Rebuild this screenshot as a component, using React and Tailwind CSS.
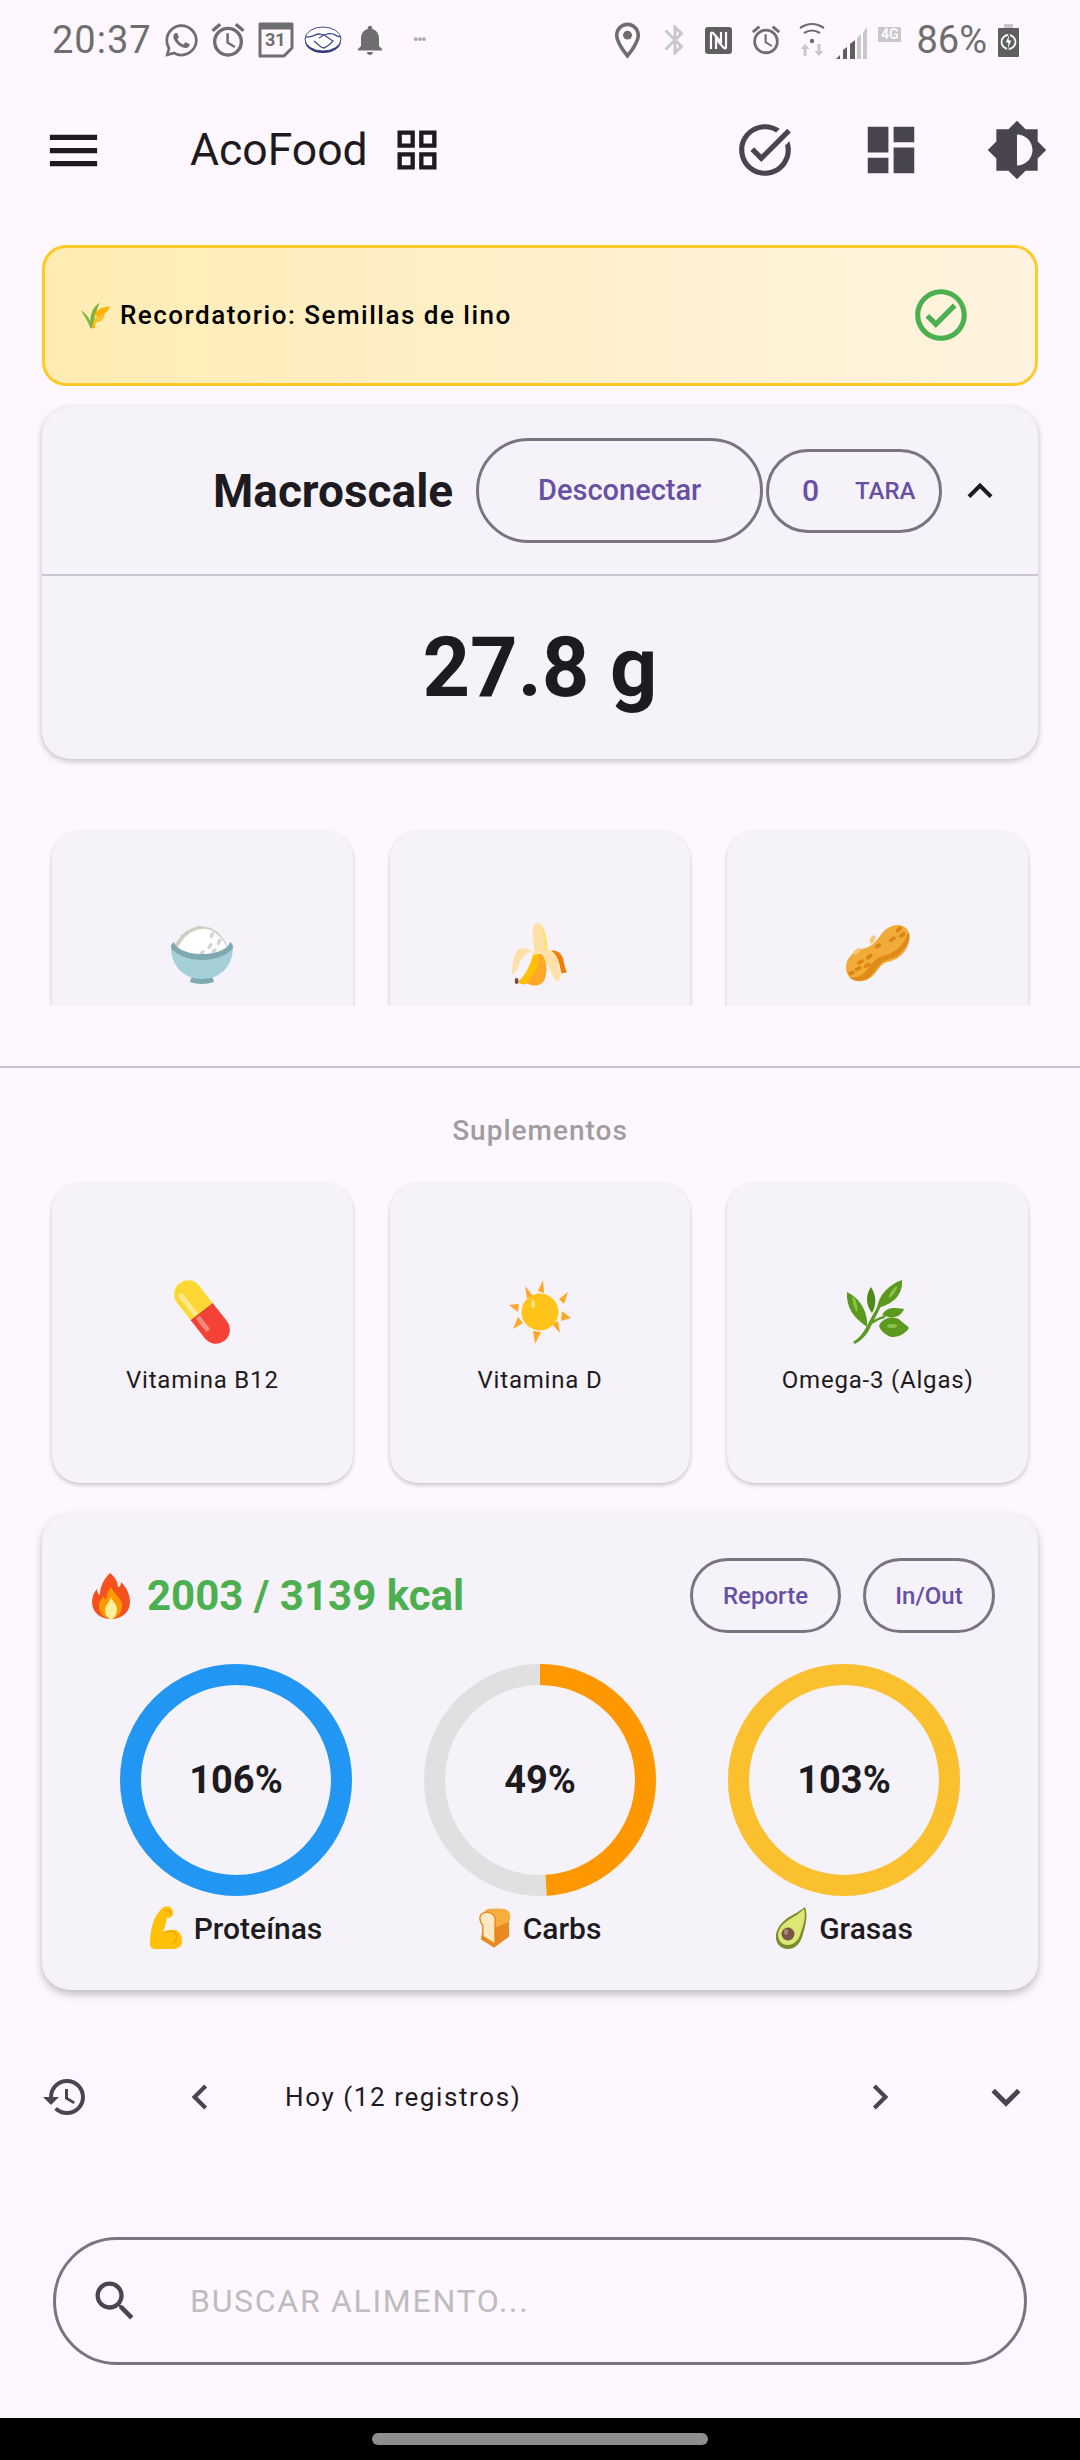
import React from 'react'
import { FaWhatsapp } from 'react-icons/fa'
import {
  MdMenu, MdGridView, MdOutlineTaskAlt, MdDashboard, MdBrightnessMedium, MdOutlineCheckCircle,
  MdExpandLess, MdExpandMore, MdHistory, MdChevronLeft, MdChevronRight, MdSearch, MdNotifications,
  MdOutlineAlarm, MdOutlineLocationOn, MdBluetooth,
} from 'react-icons/md'

function Rice() {
  return (
    <svg viewBox="0 0 64 64" className="w-[64px] h-[64px]">
      <path d="M22 54h20l2 6q-12 4-24 0z" fill="#7fa9b1" />
      <path d="M1 25c0 16 10 32 31 32s31-16 31-32z" fill="#a6d0d8" />
      <path d="M5 23c1-4 5-6 6-10 3-1 5-5 8-5 3-3 6-2 9-4 3 0 5 0 8 1 3 0 5 1 8 3 3 1 5 3 7 6 2 2 4 5 6 9l-2 8H6z" fill="#d0cdc2" />
      <path d="M8 26c1-4 4-6 6-10 3-2 5-5 8-6 4-2 10-4 15-3 5 1 9 4 12 7 3 3 6 7 8 12-6 5-15 7-25 7s-18-2-24-7z" fill="#fff" />
      <g fill="#d4d4d4">
        <ellipse cx="42" cy="13" rx="1.8" ry="3.4" transform="rotate(20 42 13)" />
        <ellipse cx="49" cy="20" rx="1.8" ry="3.4" transform="rotate(25 49 20)" />
        <ellipse cx="40" cy="24" rx="1.8" ry="3.4" transform="rotate(35 40 24)" />
        <ellipse cx="32" cy="31" rx="1.8" ry="3.4" transform="rotate(40 32 31)" />
        <ellipse cx="44" cy="29" rx="1.8" ry="3.4" transform="rotate(40 44 29)" />
      </g>
      <path d="M1 25c0-2 1-4 3-5 1 6 12 12 28 12s27-6 28-12c2 1 3 3 3 5 0 4-13 13-31 13S1 29 1 25z" fill="#7fa9b1" />
    </svg>
  )
}

function Banana() {
  return (
    <svg viewBox="2 8 60 50" preserveAspectRatio="none" className="w-[55px] h-[63px]">
      <path d="M40 30c0-8-3-17-7-21-3-2-7-1-8 3-1 7 1 18 3 27l12 2z" fill="#ffe0a8" />
      <path d="M33 8c5 4 8 14 8 22l-3 2c0-8-2-18-5-24z" fill="#ffe26a" />
      <path d="M25 31q8 4 16-1l2 6-8 7-9-6z" fill="#ffe26a" />
      <path d="M19 56c-4 1-8 0-11-1 8-3 17-14 17-20 3-2 7-3 9-2 6 4 7 12 4 19-3 6-12 7-19 4z" fill="#ffa726" />
      <path d="M8 55c9-5 15-16 17-22l6 1c1 9-7 19-16 23z" fill="#ffc107" />
      <ellipse cx="7" cy="54" rx="2" ry="2.4" fill="#6d4c41" />
      <path d="M2 49c0-8 2-17 7-20 5-2 11-1 15 2-6 0-11 4-14 9-2 4-4 8-8 9z" fill="#ffe0a8" />
      <path d="M35 33c3-4 9-5 14-1 3 3 4 12 6 17 1 4-3 6-6 4-5-4-6-13-14-20z" fill="#ffe0a8" />
      <path d="M45 30c6-1 11 2 13 7 1 4 2 8 4 10l-6 1c-2-6-3-14-11-18z" fill="#f57c00" />
    </svg>
  )
}

function Peanut() {
  return (
    <svg viewBox="4 7 58 56" preserveAspectRatio="none" className="w-[64px] h-[61px]">
      <path d="M4 47c0-10 8-16 18-18 6-2 10-7 15-14 5-6 13-9 19-6 6 3 7 11 4 18-3 8-11 14-19 15-4 1-6 4-9 8-5 8-12 11-19 9-6-2-9-6-9-12z" fill="#f0ab38" />
      <path d="M61 14c2 8-3 16-9 21-5 4-11 4-15 7-5 4-7 11-14 15-5 3-12 3-16-1 8 1 13-3 17-8 4-6 7-10 14-12 8-2 16-7 20-16z" fill="#e08a1a" />
      <g fill="#dc8514">
        <ellipse cx="52" cy="12" rx="1.8" ry="3.4" transform="rotate(50 52 12)" />
        <ellipse cx="55" cy="17" rx="1.8" ry="3.4" transform="rotate(50 55 17)" />
        <ellipse cx="46" cy="21" rx="1.8" ry="3.4" transform="rotate(55 46 21)" />
        <ellipse cx="33" cy="27" rx="1.8" ry="3.4" transform="rotate(55 33 27)" />
        <ellipse cx="25" cy="37" rx="1.8" ry="3.4" transform="rotate(50 25 37)" />
        <ellipse cx="17" cy="42" rx="1.8" ry="3.4" transform="rotate(60 17 42)" />
        <ellipse cx="23" cy="45" rx="1.8" ry="3.4" transform="rotate(60 23 45)" />
        <ellipse cx="15" cy="48" rx="1.8" ry="3.4" transform="rotate(60 15 48)" />
        <ellipse cx="9" cy="52" rx="1.8" ry="3" transform="rotate(70 9 52)" />
      </g>
      <ellipse cx="14" cy="32" rx="2" ry="4" transform="rotate(55 14 32)" fill="#f8c675" />
      <ellipse cx="28" cy="21" rx="2" ry="4" transform="rotate(25 28 21)" fill="#f8c675" />
    </svg>
  )
}

function Pill() {
  return (
    <svg viewBox="0 0 64 64" className="w-[64px] h-[64px]">
      <g transform="rotate(-38 32 32)">
        <path d="M18 32V9.5a14 14 0 0 1 28 0V32z" fill="#fdd835" />
        <path d="M18 32v22.5a14 14 0 0 0 28 0V32z" fill="#f44336" />
        <rect x="18" y="31.4" width="28" height="1.2" fill="#b71c1c" opacity="0.6" />
        <rect x="23" y="4" width="5" height="27" rx="2.5" fill="#fff" opacity="0.45" />
        <rect x="23" y="33" width="5" height="18" rx="2.5" fill="#fff" opacity="0.35" />
      </g>
    </svg>
  )
}

function Sun() {
  return (
    <svg viewBox="0 0 64 64" className="w-[64px] h-[64px]">
      <g fill="#ffa726">
        <path d="M35 0l1 13-6-2z" />
        <path d="M17 6l8 10-6 2z" />
        <path d="M60 12l-4 12-5-5z" />
        <path d="M1 25l10-1-1 8z" />
        <path d="M63 38l-10 3 1-10z" />
        <path d="M5 49l5-12 5 6z" />
        <path d="M52 53l-8-9 6-3z" />
        <path d="M27 64l-2-13 8 1z" />
      </g>
      <circle cx="32" cy="32" r="18.5" fill="#ffc31a" />
      <ellipse cx="25" cy="24" rx="2" ry="4" fill="#ffe083" />
    </svg>
  )
}

function Herb() {
  return (
    <svg viewBox="0 0 64 64" className="w-[64px] h-[64px]">
      <path d="M7 62c8-5 12-12 16-20 4-8 8-14 12-22l2 1c-3 8-6 13-9 19 4-2 7-4 11-4l0 2c-5 1-8 3-13 6-4 9-8 15-17 20z" fill="#5b9a1f" />
      <path d="M31 28C33 15 42 5 56 0c1 13-7 24-25 28z" fill="#5b9a1f" />
      <path d="M26 33c-6-8-7-17-1-26 5 8 6 17 1 26z" fill="#4e8a1a" />
      <path d="M21 47C8 38 0 28 1 12c12 6 21 18 20 35z" fill="#5b9a1f" />
      <path d="M36 35c4-8 12-8 22-6-3 8-12 11-22 6z" fill="#5b9a1f" />
      <path d="M33 46c3-8 14-11 21-6 2 2 9 7 9 8-4 7-16 12-22 7-4-2-7-6-8-9z" fill="#5b9a1f" />
      <ellipse cx="9" cy="24" rx="1.6" ry="8" transform="rotate(-15 9 24)" fill="#8bc34a" />
      <ellipse cx="47" cy="12" rx="1.6" ry="7" transform="rotate(35 47 12)" fill="#8bc34a" />
      <ellipse cx="46" cy="46" rx="5" ry="2" fill="#8bc34a" />
    </svg>
  )
}

function Fire() {
  return (
    <svg viewBox="0 0 38 46" className="w-[38px] h-[46px]">
      <path d="M18 0c5 4 8 9 8 14 2 0 3-2 3-5 6 6 9 13 9 20 0 10-8 17-19 17S0 39 0 29c0-5 2-10 5-13 0 3 1 5 3 6 0-9 4-16 10-22z" fill="#f4511e" />
      <path d="M19 14c2 5 8 9 11 16 1 8-4 16-11 16S6 39 7 31c1-4 3-6 5-8 0 2 1 3 2 4 0-5 2-9 5-13z" fill="#ff9800" />
      <path d="M19 24c1 4 6 7 6 12s-3 10-6 10-6-4-6-9c0-5 5-8 6-13z" fill="#ffee9e" />
    </svg>
  )
}

function Muscle() {
  return (
    <svg viewBox="0 0 32 44" className="w-[32px] h-[44px]">
      <path d="M14 1c6-2 10 2 9 7-1 3-3 4-6 4-1 6-3 10-4 15 3-3 8-4 12-3 5 1 7 6 7 11 0 6-4 8-10 8H5c-3 0-5-2-5-5C0 26 3 12 9 6c1-2 3-4 5-5z" fill="#ffc107" />
      <path d="M13 27c3-2 9-3 12 0 3 3 2 8-2 10" fill="none" stroke="#f59f00" strokeWidth="1.4" />
      <path d="M15 5c3-2 6 0 5 3" fill="none" stroke="#f59f00" strokeWidth="1.4" />
    </svg>
  )
}

function Bread() {
  return (
    <svg viewBox="0 0 34 42" className="w-[32px] h-[40px]">
      <path d="M7 2C11 0 24 0 29 2c4 2 5 7 3 10v18L16 42 2 33z" fill="#e88a1f" />
      <path d="M6 3c5-3 19-3 23-1 5 2 5 9 3 12l-15 7C8 12 4 8 6 3z" fill="#f6ae3e" />
      <path d="M1 10c0-5 7-7 11-5 5 2 6 7 5 10v23L4 30V18c-2-2-3-5-3-8z" fill="#ffe8c2" stroke="#e88a1f" strokeWidth="1.5" />
    </svg>
  )
}

function Avocado() {
  return (
    <svg viewBox="0 0 32 44" className="w-[32px] h-[44px]">
      <path d="M30 1c3 8 1 17-2 27-2 9-8 15-15 15C5 43 0 37 1 29 2 21 8 15 14 11 19 8 25 5 30 1z" fill="#7c8c2c" />
      <path d="M29 3c2 7 0 15-3 23-2 8-7 13-13 13-7 0-10-5-10-11 1-7 7-12 12-15 5-3 10-6 14-10z" fill="#dce775" />
      <circle cx="13" cy="28" r="6.5" fill="#795548" />
      <ellipse cx="11" cy="26" rx="2" ry="3" fill="#a1887f" />
    </svg>
  )
}

function Sheaf() {
  return (
    <svg viewBox="0 0 32 32" className="w-[30px] h-[30px]">
      <path d="M11 30C9 24 4 16 1 11c5 3 8 7 10 12 0-8 3-16 10-20-3 7-5 13-6 20l-2 7z" fill="#7cb342" />
      <path d="M13 30c0-6 3-12 8-14l1 2c-4 2-6 6-6 12z" fill="#ffb300" />
      <path d="M15 17c2-6 8-10 17-10-2 6-8 11-17 10z" fill="#ffb300" />
      <path d="M15 24c1-5 5-9 11-9 0 5-4 10-11 9z" fill="#fbc02d" />
    </svg>
  )
}

function Handshake() {
  return (
    <svg viewBox="0 0 38 28" className="w-[38px] h-[28px]">
      <ellipse cx="19" cy="15" rx="18" ry="12" fill="#2d3277" />
      <ellipse cx="19" cy="13" rx="18" ry="12" fill="#fff" stroke="#3f4a8a" strokeWidth="1" />
      <path d="M2 11c6 1 9-3 13-3 2 0 3 1 5 1 3-1 6-2 9-1 2 1 5 3 8 3M10 15l7 6 3 1 5-3 4-4-9-6-5 3" fill="none" stroke="#3f4a8a" strokeWidth="1.3" />
    </svg>
  )
}

function CalendarIcon() {
  return (
    <div className="relative w-[36px] h-[36px]">
      <svg viewBox="0 0 36 36" className="absolute inset-0 w-full h-full">
        <path d="M2 2h32v24l-8 8H2z" fill="none" stroke="#6e6e6e" strokeWidth="3" strokeLinejoin="round" />
        <path d="M2 5h32" stroke="#6e6e6e" strokeWidth="5" />
      </svg>
      <span className="absolute left-[7px] top-[8px] text-[18px] leading-[20px] font-bold text-[#6e6e6e]">31</span>
    </div>
  )
}

function NfcIcon() {
  return (
    <svg viewBox="0 0 27 27" className="w-[27px] h-[27px]">
      <rect width="27" height="27" rx="3" fill="#5f5f5f" />
      <path d="M6 22V7q0-2 2-1l8 9V5M21 5v15q0 2-2 1l-8-9v10" fill="none" stroke="#fef7ff" strokeWidth="2.2" />
    </svg>
  )
}

function WifiIcon() {
  return (
    <svg viewBox="0 0 26 36" className="w-[26px] h-[36px]">
      <g fill="none" stroke="#6e6e6e" strokeWidth="2.2">
        <path d="M1 6q12-8 24 0" />
        <path d="M5 11q8-5 16 0" />
      </g>
      <circle cx="13" cy="19" r="2.2" fill="#6e6e6e" />
      <path d="M6 22l-4.5 5h3v7h3v-7h3zM20 34l4.5-5h-3v-7h-3v7h-3z" fill="#c8c8c8" />
    </svg>
  )
}

function SignalIcon() {
  return (
    <svg viewBox="0 0 32 33" className="w-[32px] h-[33px]">
      <path d="M0 33l4-4v4zM7 33v-9l4-3v12zM14 33V18l5-4v19z" fill="#5f5f5f" />
      <path d="M21 33V12l4-4v25zM27 33V6l4-5v32z" fill="#c8c8c8" />
    </svg>
  )
}

function BatteryIcon() {
  return (
    <svg viewBox="0 0 21 33" className="w-[21px] h-[33px]">
      <rect x="6" y="0" width="9" height="4" fill="#c8c8c8" />
      <rect x="0" y="4" width="21" height="29" rx="1" fill="#5f5f5f" />
      <circle cx="10.5" cy="18" r="7" fill="none" stroke="#fff" strokeWidth="1.8" />
      <path d="M12 8l-5 11h3l-1 9 5-12h-3z" fill="#fff" stroke="#5f5f5f" strokeWidth="1" />
    </svg>
  )
}

function StatusBar() {
  return (
    <div className="h-[80px] pl-[52px] pr-[61px] flex items-center justify-between text-[#6e6e6e]">
      <div className="flex items-center">
        <span className="text-[38px] leading-none tracking-[1px] w-[111px]">20:37</span>
        <FaWhatsapp className="text-[37px]" />
        <MdOutlineAlarm className="text-[40px] ml-[8px]" />
        <div className="ml-[10px]"><CalendarIcon /></div>
        <div className="ml-[10px]"><Handshake /></div>
        <MdNotifications className="text-[36px] ml-[10px]" />
        <span className="ml-[25px] text-[14px] leading-none tracking-[-1px] text-[#a8a8a8] font-black">•••</span>
      </div>
      <div className="flex items-center">
        <MdOutlineLocationOn className="text-[43px]" />
        <MdBluetooth className="text-[36px] ml-[8px] text-[#c8c8c8]" />
        <div className="ml-[12px]"><NfcIcon /></div>
        <MdOutlineAlarm className="text-[34px] ml-[17px]" />
        <div className="ml-[16px]"><WifiIcon /></div>
        <div className="ml-[11px] mt-[4px]"><SignalIcon /></div>
        <span className="ml-[10px] -mt-[12px] bg-[#c8c8c8] text-[#fef7ff] text-[14px] leading-[15px] font-bold px-[3px] rounded-[1px]">4G</span>
        <span className="ml-[15px] text-[38px] leading-none">86%</span>
        <div className="ml-[11px]"><BatteryIcon /></div>
      </div>
    </div>
  )
}

function AppBar() {
  return (
    <div className="h-[140px] pl-[42px] pr-[32px] flex items-center">
      <MdMenu className="text-[63px] text-[#1d1b20]" />
      <span className="ml-[85px] text-[44.5px] leading-none text-[#1d1b20]">AcoFood</span>
      <MdGridView className="text-[52px] ml-[23px] text-[#1d1b20]" />
      <div className="ml-auto flex items-center gap-[64px] text-[#49454f]">
        <MdOutlineTaskAlt className="text-[62px]" />
        <MdDashboard className="text-[62px]" />
        <MdBrightnessMedium className="text-[62px]" />
      </div>
    </div>
  )
}

function Reminder() {
  return (
    <div className="mt-[25px] mx-[42px] h-[141px] rounded-[24px] border-[3px] border-[#ffca28] bg-gradient-to-r from-[#ffecb3] to-[#fff3e0] pl-[35px] pr-[63px] pb-[2px] flex items-center justify-between">
      <div className="flex items-center">
        <Sheaf />
        <span className="ml-[10px] text-[26px] leading-none font-medium tracking-[1.5px] text-black">Recordatorio: Semillas de lino</span>
      </div>
      <MdOutlineCheckCircle className="text-[62px] text-[#4caf50]" />
    </div>
  )
}

function OutlineBtn({ className, children }) {
  return (
    <div className={`flex items-center justify-center rounded-full border-[3px] border-[#79747e] text-[#6750a4] font-medium ${className}`}>
      {children}
    </div>
  )
}

function ScaleCard() {
  return (
    <div className="mt-[21px] mx-[42px] h-[352px] rounded-[28px] bg-[#f6f2f9] shadow-[0_2px_6px_rgba(0,0,0,0.25)] overflow-hidden flex flex-col">
      <div className="h-[169px] border-b-2 border-[#cac4d0] pl-[171px] flex items-center">
        <span className="text-[46px] leading-none font-bold text-[#1d1b20]">Macroscale</span>
        <OutlineBtn className="ml-[23px] w-[287px] h-[105px] text-[29px]">Desconectar</OutlineBtn>
        <OutlineBtn className="ml-[3px] w-[176px] h-[84px] pl-[9px] text-[24px] gap-[36px]">
          <span className="text-[30px]">0</span>
          <span>TARA</span>
        </OutlineBtn>
        <MdExpandLess className="text-[50px] ml-[13px] text-[#1d1b20]" />
      </div>
      <div className="flex-1 flex items-center justify-center text-[83px] leading-none font-bold text-[#1d1b20]">27.8 g</div>
    </div>
  )
}

function TileGrid({ items, className, padTop }) {
  return (
    <div className={`mx-[52px] grid grid-cols-3 gap-[37px] ${className}`}>
      {items.map((item, i) => (
        <div key={i} className={`h-[300px] rounded-[28px] bg-[#f6f2f9] shadow-[0_2px_4px_rgba(0,0,0,0.22)] flex flex-col items-center ${padTop}`}>
          <div className="h-[64px] flex items-center justify-center">{item.icon}</div>
          <span className="mt-[20px] text-[24px] leading-[32px] tracking-[0.8px] text-[#1d1b20]">{item.label}</span>
        </div>
      ))}
    </div>
  )
}

function Ring({ color, percent, label, icon }) {
  const c = 2 * Math.PI * 105.5
  return (
    <div className="w-[304px] flex flex-col items-center">
      <div className="relative w-[232px] h-[232px]">
        <svg viewBox="0 0 232 232" className="w-full h-full -rotate-90">
          <circle cx="116" cy="116" r="105.5" fill="none" stroke="#e0e0e0" strokeWidth="21" />
          <circle cx="116" cy="116" r="105.5" fill="none" stroke={color} strokeWidth="21" strokeDasharray={`${c * Math.min(percent, 100) / 100 + (percent >= 100 ? 1 : 0)} ${c * 2}`} />
        </svg>
        <div className="absolute inset-0 flex items-center justify-center text-[38px] font-bold text-[#1d1b20]">{percent}%</div>
      </div>
      <div className="mt-[10px] h-[44px] flex items-center gap-[12px] text-[30px] font-medium text-[#1d1b20]">
        {icon}
        <span>{label}</span>
      </div>
    </div>
  )
}

function MacrosCard() {
  return (
    <div className="mt-[31px] mx-[42px] h-[476px] rounded-[28px] bg-[#f6f2f9] shadow-[0_4px_8px_rgba(0,0,0,0.25)]">
      <div className="pt-[44px] pl-[50px] pr-[43px] flex items-center">
        <Fire />
        <span className="ml-[17px] text-[42px] leading-none font-bold text-[#4caf50]">2003 / 3139 kcal</span>
        <OutlineBtn className="ml-auto w-[151px] h-[75px] text-[24px]">Reporte</OutlineBtn>
        <OutlineBtn className="ml-[22px] w-[132px] h-[75px] text-[24px]">In/Out</OutlineBtn>
      </div>
      <div className="mt-[31px] flex justify-center">
        <Ring color="#2196f3" percent={106} label="Proteínas" icon={<Muscle />} />
        <Ring color="#ff9800" percent={49} label="Carbs" icon={<Bread />} />
        <Ring color="#fbc02d" percent={103} label="Grasas" icon={<Avocado />} />
      </div>
    </div>
  )
}

function DateRow() {
  return (
    <div className="mt-[75px] h-[64px] pl-[41px] pr-[45px] flex items-center text-[#49454f]">
      <MdHistory className="text-[48px]" />
      <MdChevronLeft className="text-[50px] ml-[86px]" />
      <span className="ml-[60px] text-[26px] leading-none tracking-[1.6px] text-[#1d1b20]">Hoy (12 registros)</span>
      <MdChevronRight className="text-[50px] ml-auto" />
      <MdExpandMore className="text-[58px] ml-[72px]" />
    </div>
  )
}

function SearchBar() {
  return (
    <div className="mt-[108px] mx-[53px] h-[128px] rounded-full border-[3px] border-[#79747e] pl-[33px] flex items-center">
      <MdSearch className="text-[52px] text-[#49454f]" />
      <span className="ml-[49px] text-[32px] leading-none tracking-[1.7px] text-[#bdbdbd]">BUSCAR ALIMENTO...</span>
    </div>
  )
}

export default function App() {
  const foods = [{ icon: <Rice /> }, { icon: <Banana /> }, { icon: <Peanut /> }]
  const supplements = [
    { icon: <Pill />, label: 'Vitamina B12' },
    { icon: <Sun />, label: 'Vitamina D' },
    { icon: <Herb />, label: 'Omega-3 (Algas)' },
  ]

  return (
    <div className="w-[1080px] h-[2460px] bg-[#fef7ff] font-['Roboto',sans-serif] flex flex-col overflow-hidden">
      <StatusBar />
      <AppBar />
      <Reminder />
      <ScaleCard />

      {/* favourites, cut off by the scroll area */}
      <div className="mt-[46px] h-[201px] pt-[26px] overflow-hidden">
        <TileGrid items={foods} padTop="pt-[91px]" />
      </div>

      <div className="mt-[60px] h-[2px] bg-[#cac4d0]" />
      <div className="mt-[47px] text-center text-[28px] leading-[32px] tracking-[1px] font-medium text-[#9e9e9e]">Suplementos</div>
      <TileGrid items={supplements} className="mt-[36px]" padTop="pt-[97px]" />

      <MacrosCard />
      <DateRow />
      <SearchBar />

      <div className="mt-auto h-[42px] bg-black flex justify-center pt-[15px]">
        <div className="w-[336px] h-[12px] rounded-full bg-[#8e8e8e]" />
      </div>
    </div>
  )
}
